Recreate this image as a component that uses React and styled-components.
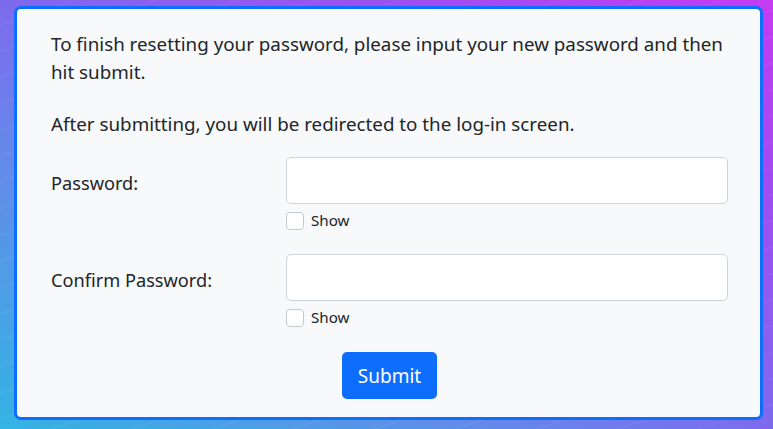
import React, { useState } from 'react';
import styled, { createGlobalStyle } from 'styled-components';

const GlobalStyle = createGlobalStyle`
  html, body {
    margin: 0;
    padding: 0;
  }
  body {
    font-family: "Noto Sans", "Open Sans", sans-serif;
    color: #212529;
  }
`;

const Page = styled.div`
  width: 773px;
  height: 429px;
  box-sizing: border-box;
  padding: 6px 10px 0 14px;
  overflow: hidden;
  background:
    repeating-linear-gradient(-18deg, rgba(255,255,255,0) 0px, rgba(255,255,255,0) 22px, rgba(255,255,255,0.05) 23px, rgba(255,255,255,0) 25px),
    linear-gradient(to top right, #33b4e4 0%, #5e8fe8 28%, #8068ee 52%, #a04cf0 78%, #c43af2 100%);
`;

const Card = styled.div`
  box-sizing: border-box;
  width: 749px;
  height: 414px;
  border: 3px solid #0d6efd;
  border-radius: 7px;
  background: #f8f9fa;
  padding: 21px 32px 18px 34px;
`;

const Text = styled.p`
  margin: 0 0 ${p => p.$gap || 0}px;
  font-size: 18.8px;
  line-height: 28px;
`;

const Row = styled.div`
  display: grid;
  grid-template-columns: 235px 442px;
  margin-bottom: ${p => p.$gap || 0}px;
`;

const Label = styled.label`
  font-size: 18.2px;
  line-height: 28px;
  padding-top: 12px;
`;

const Field = styled.div`
  display: flex;
  flex-direction: column;
`;

const Input = styled.input`
  box-sizing: border-box;
  width: 100%;
  height: 47px;
  border: 1px solid #ced4da;
  border-radius: 5px;
  background: #fff;
  font-size: 17px;
  padding: 6px 14px;
  outline: none;
`;

const Check = styled.label`
  display: flex;
  align-items: center;
  gap: 7px;
  margin-top: 7px;
  font-size: 15.2px;
  line-height: 19px;
`;

const Box = styled.input`
  appearance: none;
  margin: 0;
  width: 18px;
  height: 18px;
  border: 1px solid #c4c9cf;
  border-radius: 4px;
  background: #fff;
`;

const Actions = styled.div`
  display: flex;
  justify-content: center;
  padding-top: 1px;
`;

const Button = styled.button`
  height: 47px;
  padding: 0 16px;
  border: none;
  border-radius: 5px;
  background: #0d6efd;
  color: #fff;
  font-family: "Noto Sans", "Open Sans", sans-serif;
  font-size: 19px;
`;

const PasswordRow = ({ label, gap }) => {
  const [show, setShow] = useState(false);
  return (
    <Row $gap={gap}>
      <Label>{label}</Label>
      <Field>
        <Input type={show ? 'text' : 'password'} />
        <Check>
          <Box type="checkbox" checked={show} onChange={() => setShow(!show)} />
          Show
        </Check>
      </Field>
    </Row>
  );
};

const App = () => {
  return (
    <Page>
      <GlobalStyle />
      <Card>
        <Text $gap={24}>
          To finish resetting your password, please input your new password and then hit submit.
        </Text>
        <Text $gap={19}>After submitting, you will be redirected to the log-in screen.</Text>
        <PasswordRow label="Password:" gap={24} />
        <PasswordRow label="Confirm Password:" gap={24} />
        <Actions>
          <Button>Submit</Button>
        </Actions>
      </Card>
    </Page>
  );
};

export default App;
